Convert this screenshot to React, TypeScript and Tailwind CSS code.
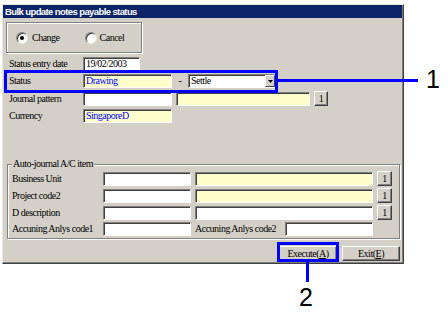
import React from "react";

const serif = "font-['Liberation_Serif',serif] text-[10px] tracking-[-0.5px]";

function Field({ w, yellow, blue, children }: { w: string; yellow?: boolean; blue?: boolean; children?: React.ReactNode }) {
  return (
    <div
      className={`${w} h-[14px] flex items-center pl-[2px] border border-t-[#808080] border-l-[#808080] border-b-white border-r-white shadow-[inset_1px_1px_0_#404040] ${
        yellow ? "bg-[#ffffcc]" : "bg-white"
      } ${blue ? "text-[#0000ff]" : "text-black"} ${serif} leading-none whitespace-nowrap overflow-hidden`}
    >
      {children}
    </div>
  );
}

function Btn({ w, h = "h-[15px]", children }: { w: string; h?: string; children: React.ReactNode }) {
  return (
    <div
      className={`${w} ${h} flex items-center justify-center bg-[#d4d0c8] border border-t-white border-l-white border-b-[#404040] border-r-[#404040] shadow-[inset_-1px_-1px_0_#808080] ${serif} leading-none text-black`}
    >
      {children}
    </div>
  );
}

function Label({ w, children }: { w: string; children: React.ReactNode }) {
  return <div className={`${w} ${serif} leading-none text-black whitespace-nowrap`}>{children}</div>;
}

function Radio({ checked }: { checked?: boolean }) {
  return (
    <span className="w-[12px] h-[12px] rounded-full bg-white border border-t-[#808080] border-l-[#808080] border-b-[#e8e6e0] border-r-[#e8e6e0] shadow-[inset_1px_1px_0_#404040] flex items-center justify-center">
      {checked && <span className="w-[4px] h-[4px] rounded-full bg-black" />}
    </span>
  );
}

export default function App() {
  return (
    <div className="relative w-[448px] h-[315px] bg-white overflow-hidden">
      {/* dialog window */}
      <div className="ml-[2px] mt-[4px] w-[402px] h-[260px] flex flex-col bg-[#d4d0c8] border border-[#e8e6e0] border-r-[#404040] border-b-[#404040] shadow-[inset_-1px_-1px_0_#808080]">
        <div className="h-[13px] w-[399px] bg-[#0c2468] flex items-center pl-[2px] text-white font-['Liberation_Sans',Arial,sans-serif] font-bold text-[9.5px] tracking-[-0.6px] leading-none whitespace-nowrap">
          Bulk update notes payable status
        </div>

        {/* change / cancel */}
        <div className="ml-[3px] mt-[4px] w-[136px] h-[31px] flex items-center pl-[9px] border border-[#808080] shadow-[1px_1px_0_#fff,inset_1px_1px_0_#fff]">
          <Radio checked />
          <span className={`ml-[4px] ${serif} leading-none`}>Change</span>
          <span className="ml-[25px]">
            <Radio />
          </span>
          <span className={`ml-[3px] ${serif} leading-none`}>Cancel</span>
        </div>

        <div className="ml-[6px] mt-[4px] flex flex-col gap-[3px]">
          <div className="flex items-center">
            <Label w="w-[74px]">Status entry date</Label>
            <Field w="w-[57px]">19/02/2003</Field>
          </div>
          <div className="flex items-center">
            <Label w="w-[74px]">Status</Label>
            <Field w="w-[89px]" yellow blue>
              Drawing
            </Field>
            <span className={`w-[16px] text-center ${serif} leading-none`}>-</span>
            <div className="w-[88px] h-[14px] flex items-center bg-white border border-t-[#808080] border-l-[#808080] border-b-white border-r-white shadow-[inset_1px_1px_0_#404040]">
              <span className={`flex-1 pl-[2px] ${serif} leading-none`}>Settle</span>
              <div className="w-[10px] h-[12px] flex items-center justify-center bg-[#d4d0c8] border border-t-white border-l-white border-b-[#404040] border-r-[#404040]">
                <svg width="5" height="3" viewBox="0 0 5 3">
                  <polygon points="0,0 5,0 2.5,3" fill="#000" />
                </svg>
              </div>
            </div>
          </div>
          <div className="flex items-center">
            <Label w="w-[74px]">Journal pattern</Label>
            <Field w="w-[89px]" />
            <div className="ml-[4px]">
              <Field w="w-[134px]" yellow />
            </div>
            <div className="ml-[4px]">
              <Btn w="w-[14px]">1</Btn>
            </div>
          </div>
          <div className="flex items-center">
            <Label w="w-[74px]">Currency</Label>
            <Field w="w-[89px]" yellow blue>
              SingaporeD
            </Field>
          </div>
        </div>

        {/* auto-journal group */}
        <div className="relative ml-[4px] mt-[41px] w-[393px] h-[75px] border border-[#808080] shadow-[1px_1px_0_#fff,inset_1px_1px_0_#fff] pl-[4px] pt-[6px] flex flex-col gap-[2px]">
          <span className={`absolute left-[4px] top-[-6px] px-[1px] bg-[#d4d0c8] ${serif} leading-none`}>
            Auto-journal A/C item
          </span>
          <div className="flex items-center">
            <Label w="w-[91px]">Business Unit</Label>
            <Field w="w-[88px]" />
            <div className="ml-[4px]">
              <Field w="w-[178px]" yellow />
            </div>
            <div className="ml-[4px]">
              <Btn w="w-[15px]">1</Btn>
            </div>
          </div>
          <div className="flex items-center">
            <Label w="w-[91px]">Project code2</Label>
            <Field w="w-[88px]" />
            <div className="ml-[4px]">
              <Field w="w-[178px]" yellow />
            </div>
            <div className="ml-[4px]">
              <Btn w="w-[15px]">1</Btn>
            </div>
          </div>
          <div className="flex items-center">
            <Label w="w-[91px]">D description</Label>
            <Field w="w-[88px]" />
            <div className="ml-[4px]">
              <Field w="w-[178px]" />
            </div>
            <div className="ml-[4px]">
              <Btn w="w-[15px]">1</Btn>
            </div>
          </div>
          <div className="flex items-center">
            <Label w="w-[91px]">Accuning Anlys code1</Label>
            <Field w="w-[88px]" />
            <Label w="ml-[4px] w-[90px]">Accuning Anlys code2</Label>
            <Field w="w-[88px]" />
          </div>
        </div>

        <div className="mt-[7px] flex justify-end gap-[5px] pr-[3px]">
          <Btn w="w-[58px]">
            Execute(<span className="underline">A</span>)
          </Btn>
          <Btn w="w-[58px]">
            Exit(<span className="underline">E</span>)
          </Btn>
        </div>
      </div>

      {/* callout 1 */}
      <div className="absolute left-[4px] top-[70px] w-[274px] h-[23px] border-[3px] border-[#0000ff]" />
      <div className="absolute left-[278px] top-[79px] w-[140px] h-[3px] bg-[#0000ff]" />
      <div className="absolute left-[426px] top-[67px] font-['Liberation_Sans',Arial,sans-serif] text-[25px] leading-none text-black">
        1
      </div>

      {/* callout 2 */}
      <div className="absolute left-[277px] top-[242px] w-[62px] h-[20px] border-[3px] border-[#0000ff]" />
      <div className="absolute left-[306px] top-[262px] w-[3px] h-[20px] bg-[#0000ff]" />
      <div className="absolute left-[299px] top-[285px] font-['Liberation_Sans',Arial,sans-serif] text-[25px] leading-none text-black">
        2
      </div>
    </div>
  );
}
